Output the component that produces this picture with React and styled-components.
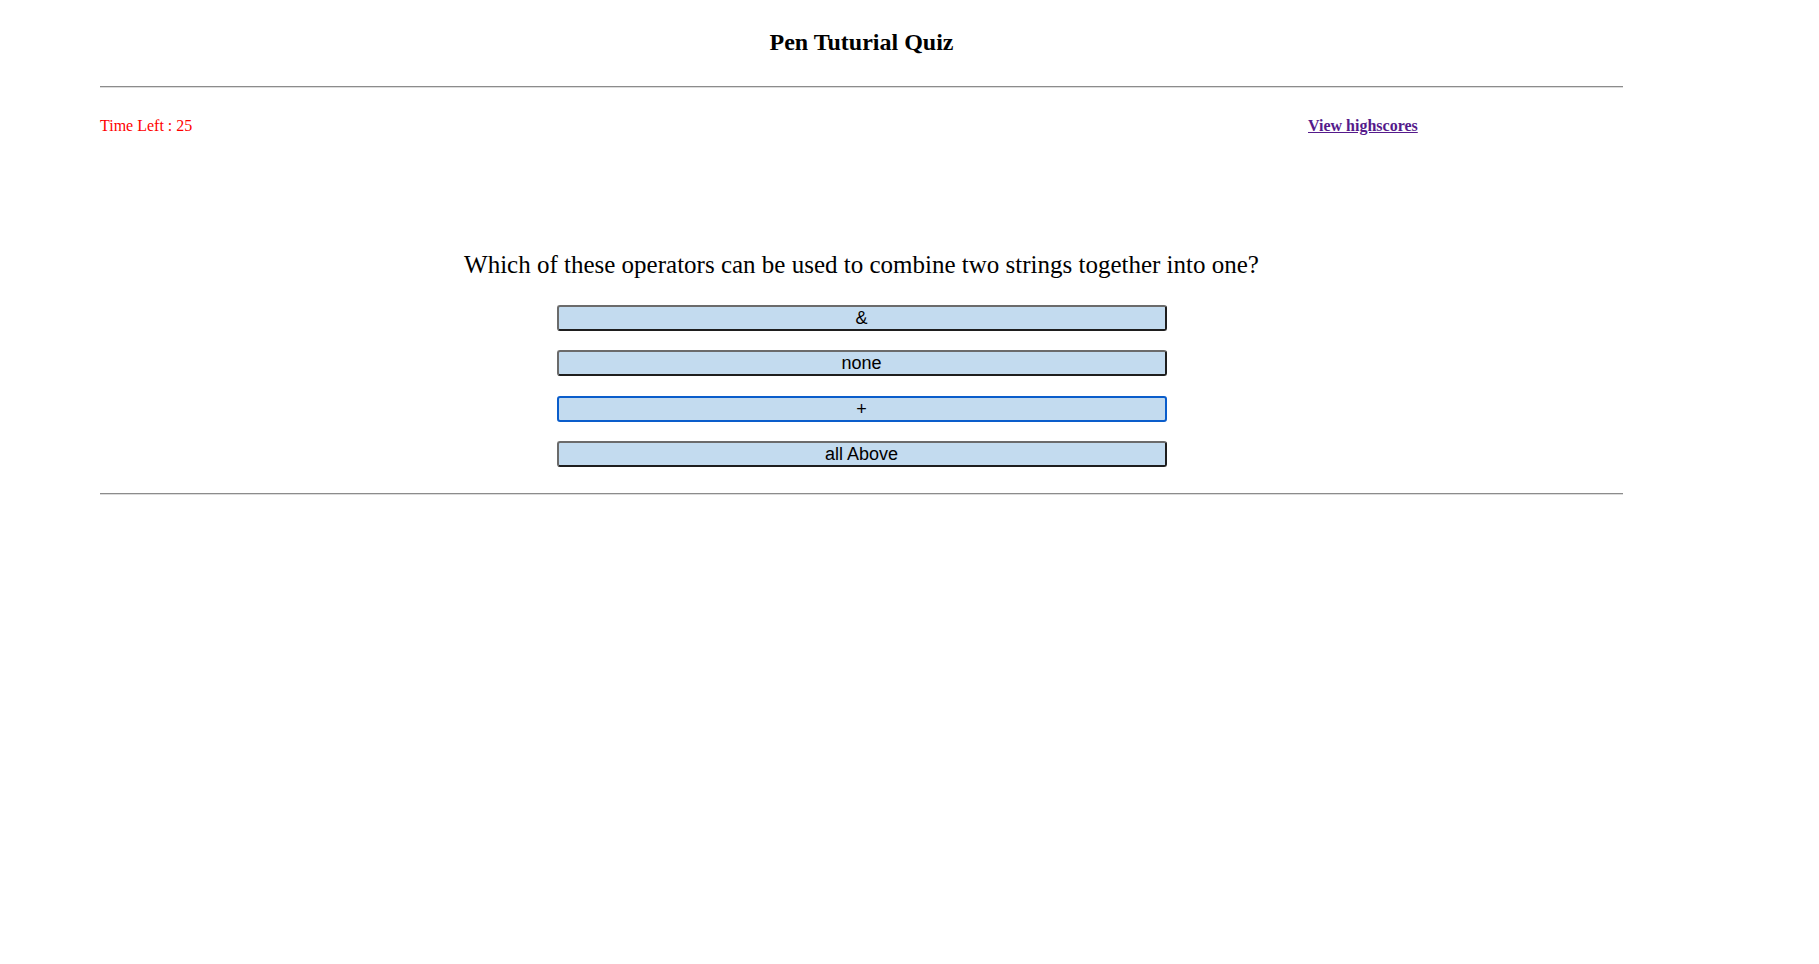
import styled, { createGlobalStyle } from "styled-components"

const questions = [
  {
    title: "Which of these operators can be used to combine two strings together into one?",
    choices: ["&", "none", "+", "all Above"],
  },
]

const App = () => {
  const q = questions[0]
  return (
    <>
      <GlobalStyle />
      <Page>
        <Title>Pen Tuturial Quiz</Title>
        <Rule />
        <InfoRow>
          <Timer>Time Left : 25</Timer>
          <ScoresLink href="#highscores">View highscores</ScoresLink>
        </InfoRow>
        <QuestionBlock>
          <Question>{q.title}</Question>
          <Choices>
            {q.choices.map((c, i) => (
              <Choice key={c} $focused={i === 2}>
                {c}
              </Choice>
            ))}
          </Choices>
        </QuestionBlock>
        <Rule />
      </Page>
    </>
  )
}
export default App

//styling

const GlobalStyle = createGlobalStyle`
  body {
    margin: 0;
    background: #ffffff;
    font-family: "Liberation Serif", "Times New Roman", serif;
    color: #000000;
  }
`

const Page = styled.div`
  width: 1523px;
  margin-left: 100px;
  padding-top: 28px;
`

const Title = styled.h2`
  margin: 0 0 30px;
  font-size: 24px;
  line-height: 28px;
  font-weight: bold;
  text-align: center;
`

const Rule = styled.hr`
  margin: 0;
  height: 0;
  border: none;
  border-top: 1px solid #8c8c8c;
  border-bottom: 1px solid #dcdcdc;
`

const InfoRow = styled.div`
  display: grid;
  grid-template-columns: 1208px auto;
  margin-top: 29px;
  font-size: 16px;
  line-height: 18px;
`

const Timer = styled.span`
  color: #ff0000;
`

const ScoresLink = styled.a`
  color: #551a8b;
  font-weight: bold;
  text-decoration: underline;
`

const QuestionBlock = styled.div`
  display: flex;
  flex-direction: column;
  align-items: center;
  padding: 116px 0 26px;
`

const Question = styled.p`
  margin: 0 0 26px;
  font-size: 25px;
  line-height: 28px;
`

const Choices = styled.div`
  display: flex;
  flex-direction: column;
  gap: 19.4px;
`

const Choice = styled.button`
  width: 610px;
  height: 26px;
  padding: 0;
  border-radius: 3px;
  border: 2px solid;
  border-color: ${(p) =>
    p.$focused ? "#0a5dcb" : "#6b6b6b #1e1e1e #1e1e1e #6b6b6b"};
  background: #c3dbef;
  font-family: "Liberation Sans", Arial, sans-serif;
  font-size: 18px;
  line-height: 22px;
  color: #000000;
  cursor: pointer;
`
